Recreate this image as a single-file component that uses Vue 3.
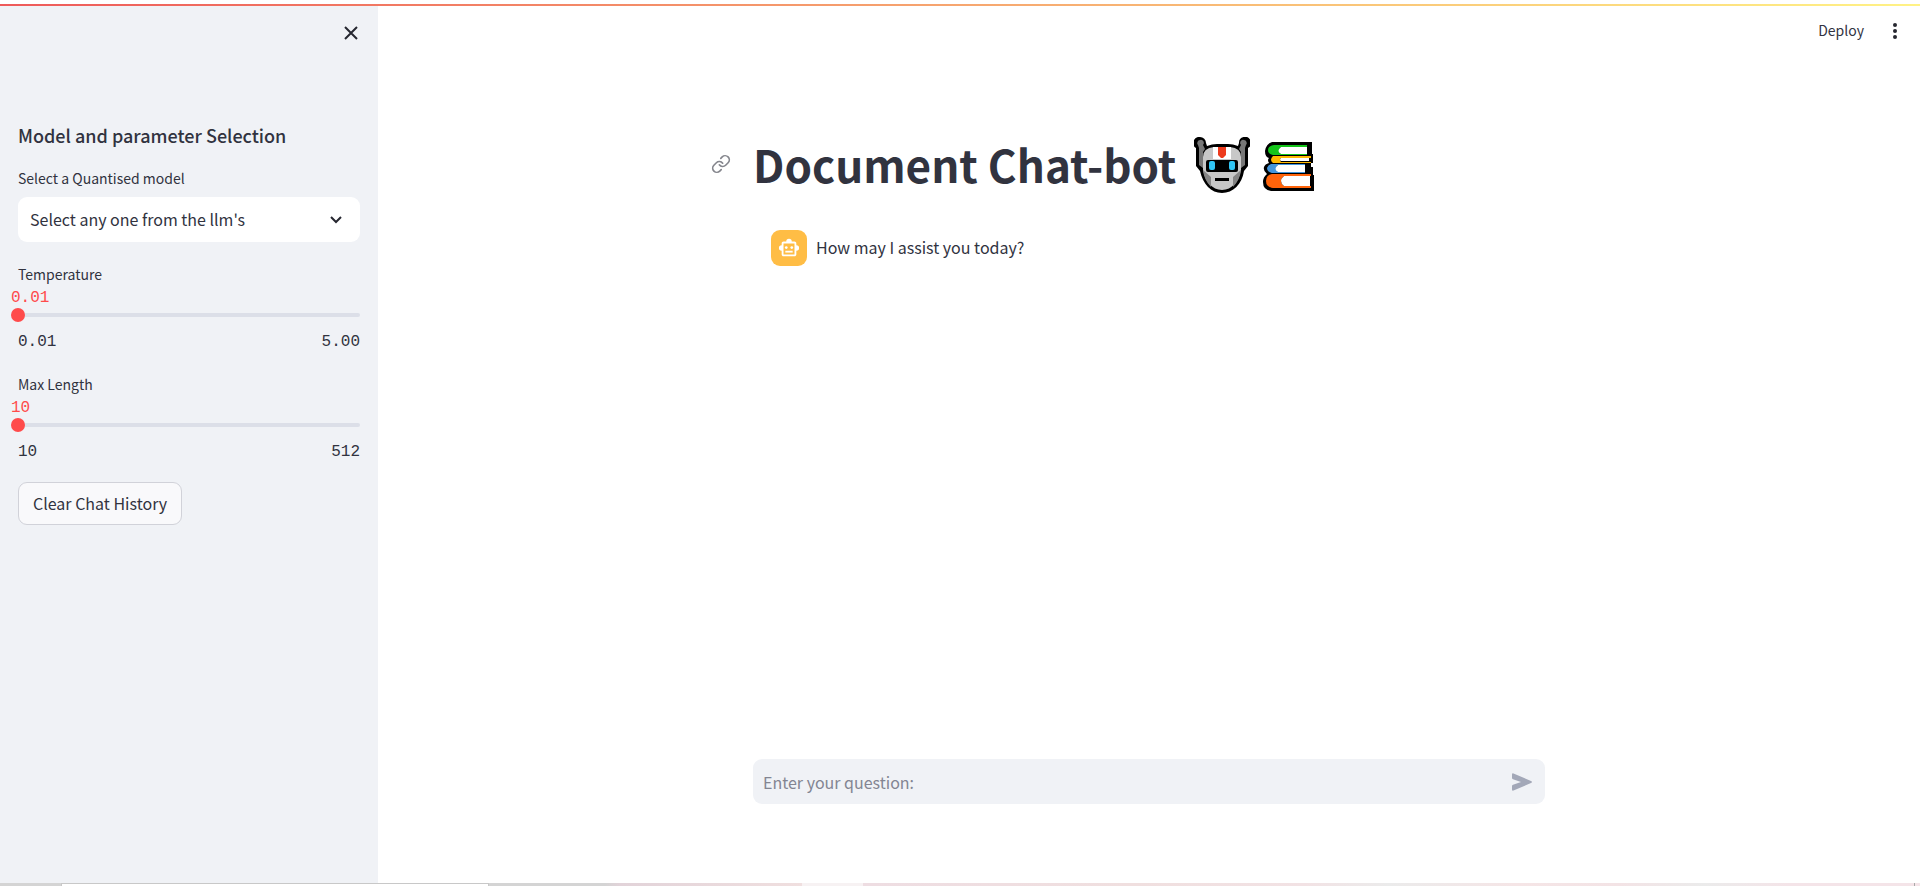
<script setup>
import { ref } from 'vue'

const model = ref("Select any one from the llm's")
const question = ref('')
const sliders = ref([
  { id: 'temperature', label: 'Temperature', value: 0.01, min: 0.01, max: 5, step: 0.01, digits: 2 },
  { id: 'max-length', label: 'Max Length', value: 10, min: 10, max: 512, step: 1, digits: 0 },
])
</script>

<template>
  <div class="app">
    <div class="decoration"></div>
    <div class="body">
      <aside class="sidebar">
        <div class="sidebar-top">
          <button class="icon-button" aria-label="Close sidebar">
            <svg width="18" height="20" viewBox="0 0 18 20" fill="none" stroke="#262730" stroke-width="2"><path d="M3 4l12 12M15 4L3 16" /></svg>
          </button>
        </div>
        <h2>Model and parameter Selection</h2>
        <label class="label" for="model">Select a Quantised model</label>
        <div class="select-wrap">
          <select id="model" v-model="model">
            <option>Select any one from the llm's</option>
          </select>
          <svg class="chevron" width="12" height="8" viewBox="0 0 12 8" fill="none" stroke="#262730" stroke-width="2"><path d="M1 1l5 5 5-5" /></svg>
        </div>
        <div v-for="s in sliders" :key="s.id" class="slider">
          <label class="label" :for="s.id">{{ s.label }}</label>
          <output class="value" :for="s.id">{{ Number(s.value).toFixed(s.digits) }}</output>
          <input :id="s.id" v-model="s.value" type="range" :min="s.min" :max="s.max" :step="s.step" />
          <div class="range"><span>{{ s.min.toFixed(s.digits) }}</span><span>{{ s.max.toFixed(s.digits) }}</span></div>
        </div>
        <button class="clear">Clear Chat History</button>
      </aside>

      <main class="main">
        <header class="toolbar">
          <button class="deploy">Deploy</button>
          <button class="icon-button" aria-label="Menu">
            <svg width="6" height="18" viewBox="0 0 6 18" fill="#262730"><circle cx="3" cy="3" r="2" /><circle cx="3" cy="9" r="2" /><circle cx="3" cy="15" r="2" /></svg>
          </button>
        </header>
        <div class="content">
          <h1>
            <a class="anchor" href="#document-chat-bot" aria-label="Link to heading">
              <svg width="20" height="20" viewBox="0 0 24 24" fill="none" stroke="#85868d" stroke-width="2" stroke-linecap="round" stroke-linejoin="round"><path d="M10 13a5 5 0 0 0 7.540.540l3-3a5 5 0 0 0-7.070-7.070l-1.720 1.710" /><path d="M14 11a5 5 0 0 0-7.540-.540l-3 3a5 5 0 0 0 7.070 7.070l1.710-1.710" /></svg>
            </a>
            <span class="title">Document Chat-bot</span>
            <svg class="robot" width="56" height="56" viewBox="0 0 56 56">
              <path d="M6 0a6 6 0 0 1 6 6l1 3q5-2 10-2h11q5 0 10 2l1-3a6 6 0 1 1 9 5v18l-4 5C48 47 39 56 28 56S9 47 6 34l-4-5V11A6 6 0 0 1 6 0z" fill="#000" />
              <path d="M6 3a3 3 0 0 0-2 5l1 3v17l4 3V15l2-3-2-4A3 3 0 0 0 6 3zM50 3a3 3 0 0 1 2 5l-1 3v17l-4 3V15l-2-3 2-4a3 3 0 0 1 3-5z" fill="#777" />
              <path d="M9 20q0-9 11-10h16q11 1 11 10v13c-2 11-9 20-19 20S11 44 9 33z" fill="#c8c8c8" />
              <path d="M9 33l8 7v10q-7-7-8-17zM47 33l-8 7v10q7-7 8-17z" fill="#858585" />
              <path d="M19 10h18v12H19z" fill="#fff" />
              <path d="M24 10h8v8l-3 3h-2l-3-3z" fill="#ed3b1d" />
              <path d="M14 23h28q2 0 2 2v8q0 2-2 2H14q-2 0-2-2v-8q0-2 2-2zM21 41h14v3H21z" fill="#000" />
              <rect x="15" y="24" width="6" height="9" rx="2" fill="#31c5f4" /><rect x="35" y="24" width="6" height="9" rx="2" fill="#31c5f4" />
            </svg>
            <svg class="books" width="50" height="50" viewBox="0 0 50 50">
              <path d="M9 0h40v12h1v9h-2v4h2v8h1v16H8Q0 48 0 40q0-5 4-8-4-3-3-7 1-3 5-4-2-3 0-5-4-1-4-7 1-7 7-9z" fill="#000" />
              <path d="M11 3h33v2H18q-4 4 0 7h26v1H10q-5-1-5-5 0-4 6-5z" fill="#14c51a" />
              <path d="M18 5h26v7H18q-5-3 0-7z" fill="#fff" />
              <path d="M10 14h38v2H18q-2 2 0 4h30v1H10q-4-3 0-7z" fill="#ffb900" /><path d="M18 16h28v3H18q-2-1 0-3z" fill="#fff" />
              <path d="M8 22h34v1H15q-3 3 0 7h27v1H9q-5-1-5-5 1-3 4-4z" fill="#4496db" /><path d="M15 23h27v7H15q-5-3 0-7z" fill="#fff" />
              <path d="M9 32h39v2H21q-6 5 0 10h27v2H10q-7-1-7-7t6-7z" fill="#ff640b" />
              <path d="M21 34h26v10H21q-6-5 0-10z" fill="#fff" />
            </svg>
          </h1>
          <div class="message">
            <div class="avatar">
              <svg width="22" height="22" viewBox="0 0 24 24" fill="#fff"><path fill-rule="evenodd" d="M20 9V7c0-1.100-.9-2-2-2h-3a3 3 0 0 0-6 0H6c-1.100 0-2 .9-2 2v2a3 3 0 0 0 0 6v4c0 1.100.9 2 2 2h12c1.100 0 2-.9 2-2v-4a3 3 0 0 0 0-6zM6 7h12v12H6z" /><circle cx="9" cy="11.500" r="1.500" /><circle cx="15" cy="11.500" r="1.500" /><path d="M8 15h8v2H8z" /></svg>
            </div>
            <p>How may I assist you today?</p>
          </div>
        </div>
        <form class="chat-input" @submit.prevent>
          <input v-model="question" type="text" placeholder="Enter your question:" aria-label="Enter your question:" />
          <button class="icon-button" aria-label="Send">
            <svg width="20" height="18" viewBox="0 0 20 18" fill="#a3a8b8"><path d="M0 1.500Q0 0 1.500.4L19 8q2 1 0 2L1.500 17.600Q0 18 0 16.500V13q0-1 1-1.200L9 9 1 6.200Q0 6 0 5z" /></svg>
          </button>
        </form>
      </main>
    </div>
    <footer class="edge"><i class="e1"></i><i class="e2"></i><i class="e3"></i><i class="e4"></i><i class="e5"></i><i class="e6"></i></footer>
  </div>
</template>

<style>
body { margin: 0; }
</style>

<style scoped>
* { box-sizing: border-box; }
.app {
  min-height: 100vh;
  display: flex;
  flex-direction: column;
  background: #fff;
  color: #31333f;
  font: 16px/24px "Noto Sans CJK SC", "Open Sans", sans-serif;
}
button, input, select { font: inherit; color: inherit; }
button { cursor: pointer; }
.decoration { height: 2px; margin-top: 4px; background: linear-gradient(90deg, #ee5a5a, #fff285); }
.body { flex: 1; display: flex; }
.sidebar { width: 378px; padding: 0 18px; background: #f0f2f6; }
.sidebar-top { height: 114px; padding-top: 17px; display: flex; justify-content: flex-end; align-items: flex-start; }
.icon-button { display: flex; padding: 0; border: 0; background: none; }
h2 { margin: 0 0 16px; font-size: 18px; line-height: 30px; font-weight: 500; }
.label { display: block; font-size: 14px; line-height: 24px; }
.select-wrap { position: relative; margin: 7px 0 20px; }
select {
  display: block;
  width: 100%;
  height: 45px;
  padding: 0 40px 2px 12px;
  border: 0;
  border-radius: 9px;
  background: #fff;
  appearance: none;
}
.chevron { position: absolute; right: 18px; top: 19px; }
.slider { margin-bottom: 18px; font-family: "Liberation Mono", monospace; }
.slider .label { font-family: "Noto Sans CJK SC", "Open Sans", sans-serif; }
.value { display: block; margin-left: -7px; padding-top: 2px; line-height: 20px; color: #ff4b4b; }
input[type="range"] {
  display: block;
  width: calc(100% + 7px);
  height: 14px;
  margin: 0 0 0 -7px;
  appearance: none;
  background: none;
}
input[type="range"]::-webkit-slider-runnable-track { height: 4px; border-radius: 2px; background: #dcdfe8; }
input[type="range"]::-webkit-slider-thumb { width: 14px; height: 14px; margin-top: -5px; border-radius: 50%; appearance: none; background: #ff4b4b; }
.range { display: flex; justify-content: space-between; margin-top: 8px; line-height: 24px; }
.clear { height: 43px; padding: 0 14px 2px; border: 1px solid #d1d2d9; border-radius: 9px; background: #f9f9fb; }
.main { flex: 1; min-width: 0; display: flex; flex-direction: column; }
.toolbar { height: 50px; padding: 0 22px; display: flex; align-items: center; justify-content: flex-end; gap: 28px; }
.deploy { padding: 0 0 2px; border: 0; background: none; font-size: 14px; }
.content { width: 100%; max-width: 792px; margin: 0 auto; padding-top: 80px; flex: 1; }
h1 { position: relative; display: flex; align-items: center; height: 58px; margin: 0; font-size: 44px; line-height: 58px; font-weight: 700; white-space: nowrap; }
.title { padding-bottom: 2px; }
.anchor { position: absolute; left: -42px; top: 18px; display: flex; }
.robot { margin-left: 18px; }
.books { margin: 4px 0 0 13px; overflow: visible; }
.message { display: flex; gap: 9px; padding: 36px 18px; align-items: center; }
.avatar { display: flex; align-items: center; justify-content: center; width: 36px; height: 36px; border-radius: 9px; background: #ffbd45; }
.message p { margin: 0; padding-bottom: 2px; }
.chat-input { display: flex; align-items: center; width: 100%; max-width: 792px; height: 45px; margin: 0 auto 79px; padding: 0 13px 0 10px; border-radius: 9px; background: #f0f2f6; }
.chat-input input { flex: 1; min-width: 0; padding: 0; border: 0; outline: 0; background: none; }
.chat-input input::placeholder { color: #838592; opacity: 1; }
.edge { display: flex; height: 3px; }
.e1 { width: 61px; background: #d4d4d4; }
.e2 { width: 428px; border: solid #c8c8c8; border-width: 1px 1px 0; }
.e3 { width: 313px; background: linear-gradient(90deg, #d4d4d4 37%, #e2d3d9 42%, #f0dfdf); }
.e4 { width: 61px; background: #f7f2f3; }
.e5 { flex: 1; background: linear-gradient(90deg, #eedde2, #f0dfdf 26%, #f2e2e4 42%, #ebebeb 50%, #f5e5e6 62%, #f3e3e5 72%, #ebebeb 80%, #f4e4e8 88%); }
.e6 { width: 6px; border-left: 1px solid #aaa; background: #f4e4e8; }
</style>
